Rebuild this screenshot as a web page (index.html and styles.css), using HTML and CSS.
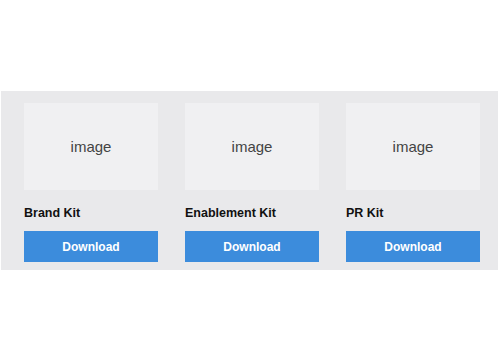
FILE: index.html
```html
<!DOCTYPE html>
<html lang="en">
<head>
    <meta charset="UTF-8">
    <meta name="viewport" content="width=device-width, initial-scale=1.0">
    <title>Press Kits</title>
    <link rel="stylesheet" href="styles.css">
</head>
<body>
    <div class="kits">
        <div class="kit">
            <div class="kit-image">image</div>
            <p class="kit-title">Brand Kit</p>
            <button class="kit-download">Download</button>
        </div>
        <div class="kit">
            <div class="kit-image">image</div>
            <p class="kit-title">Enablement Kit</p>
            <button class="kit-download">Download</button>
        </div>
        <div class="kit">
            <div class="kit-image">image</div>
            <p class="kit-title">PR Kit</p>
            <button class="kit-download">Download</button>
        </div>
    </div>
</body>
</html>
```
FILE: styles.css
```css
body {
    font-family: "Liberation Sans", Arial, sans-serif;
    background-color: #fff;
    margin: 0;
    padding: 91px 0 0 1px;
}
.kits {
    display: flex;
    gap: 27px;
    width: 474px;
    padding: 12px 0 8px 23px;
    background-color: #e9e9eb;
}
.kit {
    width: 134px;
    display: flex;
    flex-direction: column;
}
.kit-image {
    height: 87px;
    display: flex;
    align-items: center;
    justify-content: center;
    background-color: #f0f0f2;
    color: #444;
    font-size: 15px;
}
.kit-title {
    margin: 16px 0 0;
    font-size: 12.5px;
    font-weight: bold;
    line-height: 14px;
    color: #111;
}
.kit-download {
    margin-top: 11px;
    height: 31px;
    border: none;
    background-color: #3c8cdc;
    color: #fff;
    font-family: inherit;
    font-size: 12px;
    font-weight: bold;
    cursor: pointer;
}
```
